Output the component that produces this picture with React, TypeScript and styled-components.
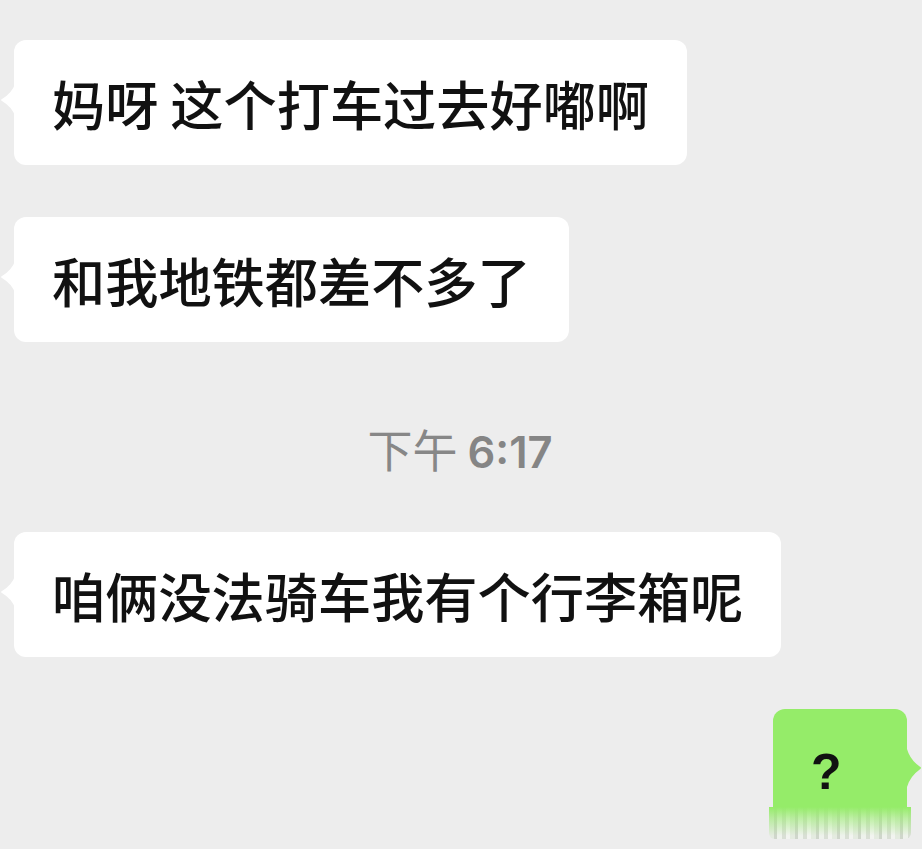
import styled, { createGlobalStyle } from "styled-components";

const GlobalStyle = createGlobalStyle`
    html, body {
        margin: 0;
        padding: 0;
        background: #ededed;
    }
    body {
        font-family: "Noto Sans CJK SC", "Noto Sans", sans-serif;
        overflow: hidden;
    }
`;

const ChatList = styled.div`
    display: flex;
    flex-direction: column;
    width: 922px;
    height: 849px;
    padding-top: 40px;
    box-sizing: border-box;
    overflow: hidden;
`;

const Row = styled.div<{ $mine?: boolean }>`
    display: flex;
    justify-content: ${(p) => (p.$mine ? "flex-end" : "flex-start")};
    padding: ${(p) => (p.$mine ? "0 15px 0 0" : "0 0 0 14px")};
    margin-bottom: 52px;
`;

const Bubble = styled.div<{ $mine?: boolean }>`
    position: relative;
    display: flex;
    align-items: center;
    height: 125px;
    min-width: ${(p) => (p.$mine ? "58px" : "auto")};
    padding: 0 38px;
    border-radius: 12px;
    background: ${(p) => (p.$mine ? "#95ec69" : "#ffffff")};
    color: #111;
    font-size: 53.2px;
    font-weight: 500;
    line-height: 1;
    white-space: pre;
`;

const Question = styled.span`
    font-family: "Liberation Sans", "Noto Sans CJK SC", sans-serif;
    font-weight: 700;
    font-size: 50px;
`;

const Tail = styled.svg<{ $mine?: boolean }>`
    position: absolute;
    width: 15px;
    ${(p) =>
        p.$mine
            ? "top: 40px; height: 38px; right: -15px; transform: scaleX(-1);"
            : "top: 44px; height: 32px; left: -14px;"}
`;

const Time = styled.div`
    align-self: center;
    margin: 30px 0 58px;
    height: 50px;
    line-height: 50px;
    color: #878787;
    font-size: 45px;
    padding-right: 2px;
`;

const TimeDigits = styled.span`
    font-family: "Inter", "Liberation Sans", sans-serif;
    font-weight: 600;
    font-size: 43.5px;
    color: #858585;
`;

// the sent bubble runs off the bottom of the screen into a smeared strip
const Smear = styled.div`
    position: absolute;
    left: -4px;
    right: -4px;
    top: 98px;
    height: 32px;
    background:
        linear-gradient(to bottom, rgba(149, 236, 105, 1) 0%, rgba(149, 236, 105, 0.55) 35%, rgba(237, 237, 237, 0) 90%),
        repeating-linear-gradient(
            to right,
            #e4ebe0 0 5px,
            #cfd6cb 5px 8px,
            #eef2ec 8px 13px,
            #d9dfd5 13px 17px,
            #f2f4f0 17px 21px
        );
    border-radius: 0 0 6px 6px;
`;

function BubbleTail({ mine }: { mine?: boolean }) {
    return (
        <Tail $mine={mine} viewBox="0 0 15 32" preserveAspectRatio="none">
            <path
                d="M15 0 Q12 9 2 15 Q0 16 2 17 Q12 23 15 32 Z"
                fill={mine ? "#95ec69" : "#ffffff"}
            />
        </Tail>
    );
}

function App() {
    return (
        <>
            <GlobalStyle />
            <ChatList>
                <Row>
                    <Bubble>
                        <BubbleTail />
                        妈呀 这个打车过去好嘟啊
                    </Bubble>
                </Row>
                <Row>
                    <Bubble>
                        <BubbleTail />
                        和我地铁都差不多了
                    </Bubble>
                </Row>
                <Time>
                    下午 <TimeDigits>6:17</TimeDigits>
                </Time>
                <Row>
                    <Bubble>
                        <BubbleTail />
                        咱俩没法骑车我有个行李箱呢
                    </Bubble>
                </Row>
                <Row $mine>
                    <Bubble $mine>
                        <BubbleTail mine />
                        <Question>?</Question>
                        <Smear />
                    </Bubble>
                </Row>
            </ChatList>
        </>
    );
}

export default App;
